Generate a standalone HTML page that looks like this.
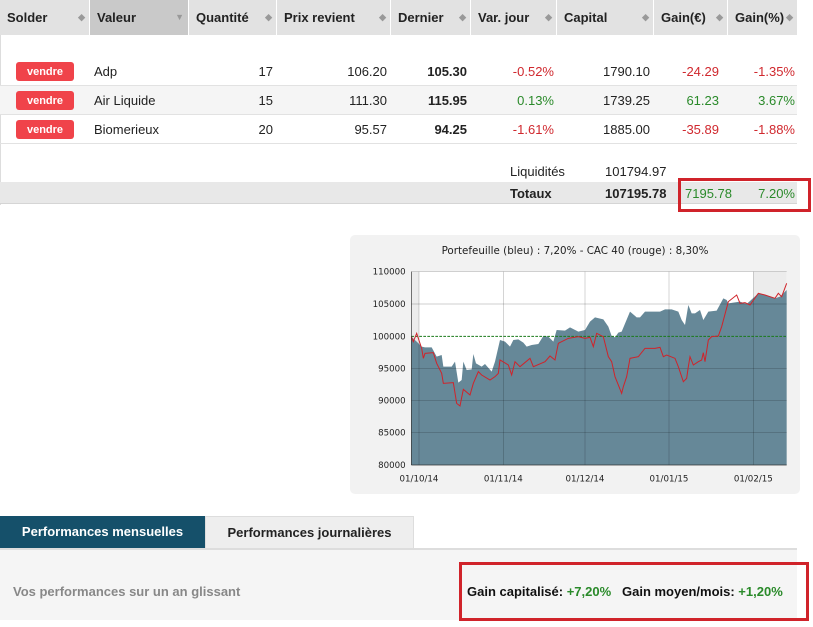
<!DOCTYPE html>
<html><head><meta charset="utf-8"><style>
*{margin:0;padding:0;box-sizing:border-box}
body{width:813px;height:627px;background:#fff;font-family:"Liberation Sans",Arial,sans-serif;font-size:13px;color:#222;position:relative;overflow:hidden}
.abs{position:absolute}
.hdr{position:absolute;top:0;height:35px;background:#e2e2e2;font-weight:bold;font-size:13px;line-height:35px;padding-left:7px;color:#222}
.hdr .s{position:absolute;right:4px;top:0;color:#999;font-size:9px}
.row{position:absolute;left:0;width:797px;height:29px;border-bottom:1px solid #e2e2e2}
.c{position:absolute;line-height:29px;white-space:nowrap}
.r{text-align:right}
.btn{position:absolute;left:16px;top:5px;width:58px;height:19px;background:#f0434a;border-radius:3px;color:#fff;font-weight:bold;font-size:11px;display:flex;align-items:center;justify-content:center;padding-top:1px}
.red{color:#d0282e}.grn{color:#2a8a2a}
b{font-weight:bold}
</style></head><body>
<div class="abs" style="left:0;top:35px;width:1px;height:170px;background:#ddd"></div>
<div class="hdr" style="left:0;width:89px">Solder<span class="s">◆</span></div>
<div class="hdr" style="left:90px;width:98px;background:#c9c9c9">Valeur<span class="s">▼</span></div>
<div class="hdr" style="left:189px;width:87px">Quantité<span class="s">◆</span></div>
<div class="hdr" style="left:277px;width:113px">Prix revient<span class="s">◆</span></div>
<div class="hdr" style="left:391px;width:79px">Dernier<span class="s">◆</span></div>
<div class="hdr" style="left:471px;width:85px">Var. jour<span class="s">◆</span></div>
<div class="hdr" style="left:557px;width:96px">Capital<span class="s">◆</span></div>
<div class="hdr" style="left:654px;width:73px">Gain(€)<span class="s">◆</span></div>
<div class="hdr" style="left:728px;width:69px">Gain(%)<span class="s">◆</span></div>

<div class="row" style="top:57px">
<div class="btn">vendre</div><div class="c" style="left:94px">Adp</div>
<div class="c r" style="left:200px;width:73px">17</div><div class="c r" style="left:300px;width:87px">106.20</div>
<div class="c r" style="left:400px;width:67px"><b>105.30</b></div><div class="c r red" style="left:480px;width:74px">-0.52%</div>
<div class="c r" style="left:570px;width:80px">1790.10</div><div class="c r red" style="left:650px;width:69px">-24.29</div>
<div class="c r red" style="left:720px;width:75px">-1.35%</div></div>
<div class="row" style="top:86px;background:#f5f5f5">
<div class="btn">vendre</div><div class="c" style="left:94px">Air Liquide</div>
<div class="c r" style="left:200px;width:73px">15</div><div class="c r" style="left:300px;width:87px">111.30</div>
<div class="c r" style="left:400px;width:67px"><b>115.95</b></div><div class="c r grn" style="left:480px;width:74px">0.13%</div>
<div class="c r" style="left:570px;width:80px">1739.25</div><div class="c r grn" style="left:650px;width:69px">61.23</div>
<div class="c r grn" style="left:720px;width:75px">3.67%</div></div>
<div class="row" style="top:115px">
<div class="btn">vendre</div><div class="c" style="left:94px">Biomerieux</div>
<div class="c r" style="left:200px;width:73px">20</div><div class="c r" style="left:300px;width:87px">95.57</div>
<div class="c r" style="left:400px;width:67px"><b>94.25</b></div><div class="c r red" style="left:480px;width:74px">-1.61%</div>
<div class="c r" style="left:570px;width:80px">1885.00</div><div class="c r red" style="left:650px;width:69px">-35.89</div>
<div class="c r red" style="left:720px;width:75px">-1.88%</div></div>
<div class="c" style="left:510px;top:157px">Liquidités</div>
<div class="c" style="left:605px;top:157px">101794.97</div>
<div class="abs" style="left:0;top:182px;width:797px;height:22px;background:#e8e8e8;border-bottom:1px solid #d5d5d5"></div>
<div class="c" style="left:510px;top:179px"><b>Totaux</b></div>
<div class="c" style="left:605px;top:179px"><b>107195.78</b></div>
<div class="c grn" style="left:685px;top:179px">7195.78</div>
<div class="c grn r" style="left:740px;top:179px;width:55px">7.20%</div>
<div class="abs" style="left:678px;top:178px;width:133px;height:34px;border:3px solid #d0232a"></div>

<div class="abs" style="left:350px;top:235px;width:450px;height:259px;background:#f2f2f2;border-radius:5px"></div>
<svg class="abs" style="left:345px;top:230px" width="460" height="270" viewBox="0 0 1380 810">
<text x="690" y="72" text-anchor="middle" font-family="DejaVu Sans,sans-serif" font-size="31" fill="#222">Portefeuille (bleu) : 7,20% - CAC 40 (rouge) : 8,30%</text>
<rect x="199" y="125" width="1126" height="580" fill="#fff"/>
<rect x="199" y="125" width="23" height="580" fill="#ececec"/>
<rect x="1225" y="125" width="100" height="580" fill="#ececec"/>
<polygon fill="#668898" points="199,705 199,320 215,335 230,350 240,352 260,352 275,380 290,375 295,410 320,410 330,395 340,458 350,450 355,395 365,420 380,418 385,372 393,400 410,410 420,402 440,425 450,395 465,330 480,335 495,350 505,330 520,328 535,338 545,350 560,345 580,342 595,318 610,320 625,335 635,300 660,302 675,292 700,305 720,300 735,275 750,262 775,268 790,290 800,318 810,322 820,308 830,305 855,245 875,262 885,262 900,245 945,245 960,238 980,238 1000,245 1010,270 1020,285 1030,225 1040,250 1050,250 1065,240 1075,270 1090,245 1115,242 1135,205 1145,210 1150,220 1185,215 1205,222 1240,190 1260,195 1290,205 1305,200 1325,180 1325,705"/>
<g stroke="#000" stroke-opacity=".25" stroke-width="2">
<line x1="199" y1="125" x2="1325" y2="125"/><line x1="199" y1="222" x2="1325" y2="222"/><line x1="199" y1="415" x2="1325" y2="415"/><line x1="199" y1="512" x2="1325" y2="512"/><line x1="199" y1="608" x2="1325" y2="608"/>
<line x1="222" y1="125" x2="222" y2="705"/><line x1="475" y1="125" x2="475" y2="705"/><line x1="720" y1="125" x2="720" y2="705"/><line x1="972" y1="125" x2="972" y2="705"/><line x1="1225" y1="125" x2="1225" y2="705"/>
</g>
<line x1="199" y1="319" x2="1325" y2="319" stroke="#1a7a1a" stroke-width="3" stroke-dasharray="8,4"/>
<polyline fill="none" stroke="#d0232a" stroke-width="3" points="199,320 205,335 215,310 230,355 235,385 240,370 265,368 275,400 290,430 295,460 325,458 335,520 345,528 355,478 375,495 385,460 400,425 410,435 435,450 450,440 460,430 465,390 490,405 500,435 510,395 525,410 555,385 565,410 600,395 615,378 630,390 640,340 670,325 700,320 720,325 735,322 745,350 755,310 775,320 790,380 800,395 810,440 830,490 835,470 845,440 855,385 880,380 900,355 930,355 945,352 955,380 965,375 990,385 1000,410 1015,455 1025,445 1030,410 1035,380 1045,405 1060,395 1070,390 1075,368 1080,395 1090,330 1100,320 1120,318 1130,290 1150,215 1175,195 1185,220 1200,218 1215,225 1240,190 1260,195 1290,205 1300,190 1310,200 1325,160"/>
<line x1="199" y1="125" x2="199" y2="705" stroke="#333" stroke-width="2"/><line x1="199" y1="705" x2="1325" y2="705" stroke="#333" stroke-width="2"/>
<g font-family="DejaVu Sans,sans-serif" font-size="26" fill="#222" text-anchor="end">
<text x="182" y="134">110000</text><text x="182" y="231">105000</text><text x="182" y="328">100000</text><text x="182" y="424">95000</text><text x="182" y="521">90000</text><text x="182" y="617">85000</text><text x="182" y="714">80000</text></g>
<g font-family="DejaVu Sans,sans-serif" font-size="26" fill="#222" text-anchor="middle">
<text x="222" y="754">01/10/14</text><text x="475" y="754">01/11/14</text><text x="720" y="754">01/12/14</text><text x="972" y="754">01/01/15</text><text x="1225" y="754">01/02/15</text></g>
</svg>

<div class="abs" style="left:0;top:516px;width:205px;height:32px;background:#15506a;color:#fff;font-weight:bold;line-height:32px;text-align:center">Performances mensuelles</div>
<div class="abs" style="left:205px;top:516px;width:209px;height:32px;background:#eee;border:1px solid #ddd;border-bottom:none;font-weight:bold;line-height:31px;text-align:center">Performances journalières</div>
<div class="abs" style="left:0;top:548px;width:797px;height:2px;background:#ddd"></div>
<div class="abs" style="left:0;top:550px;width:797px;height:70px;background:#f5f5f5"></div>
<div class="abs" style="left:13px;top:584px;color:#888;font-weight:bold;font-size:13px">Vos performances sur un an glissant</div>
<div class="abs" style="left:467px;top:584px;font-weight:bold;font-size:13px;color:#111">Gain capitalisé: <span class="grn">+7,20%</span>&nbsp;&nbsp;&nbsp;Gain moyen/mois: <span class="grn">+1,20%</span></div>
<div class="abs" style="left:459px;top:562px;width:350px;height:59px;border:3px solid #d0232a"></div>
</body></html>
